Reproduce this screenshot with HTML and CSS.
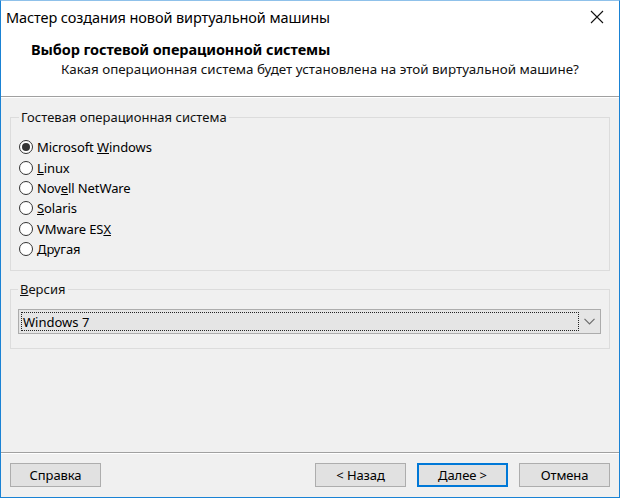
FILE: index.html
```html
<!DOCTYPE html>
<html lang="ru">
<head>
<meta charset="utf-8">
<link rel="stylesheet" href="styles.css">
</head>
<body>
<div class="window">
  <div class="titlebar">
    <span class="title">Мастер создания новой виртуальной машины</span>
    <span class="close">
      <svg width="14" height="14" viewBox="0 0 14 14"><path d="M1 1L13 13M13 1L1 13" stroke="#111" stroke-width="1.1" fill="none"/></svg>
    </span>
  </div>
  <div class="header">
    <div class="h-title">Выбор гостевой операционной системы</div>
    <div class="h-sub">Какая операционная система будет установлена на этой виртуальной машине?</div>
  </div>
  <div class="body">
    <fieldset class="group g-os">
      <legend>Гостевая операционная система</legend>
      <div class="radio checked"><span class="dot"></span><span>Microsoft <u>W</u>indows</span></div>
      <div class="radio"><span class="dot"></span><span><u>L</u>inux</span></div>
      <div class="radio"><span class="dot"></span><span>Nov<u>e</u>ll NetWare</span></div>
      <div class="radio"><span class="dot"></span><span><u>S</u>olaris</span></div>
      <div class="radio"><span class="dot"></span><span>VMware ES<u>X</u></span></div>
      <div class="radio"><span class="dot"></span><span><u>Д</u>ругая</span></div>
    </fieldset>
    <fieldset class="group g-ver">
      <legend><u>В</u>ерсия</legend>
      <div class="combo">
        <div class="combo-text"><span>Windows 7</span></div>
        <div class="combo-arrow">
          <svg width="11" height="7" viewBox="0 0 11 7"><path d="M0.5 0.8L5.5 5.8L10.5 0.8" stroke="#6d6d6d" stroke-width="1.2" fill="none"/></svg>
        </div>
      </div>
    </fieldset>
  </div>
  <div class="footer">
    <button class="btn">Справка</button>
    <div class="spacer"></div>
    <button class="btn">&lt; Назад</button>
    <button class="btn default">Далее &gt;</button>
    <button class="btn">Отмена</button>
  </div>
</div>
</body>
</html>
```
FILE: styles.css
```css
* { box-sizing: border-box; }
html, body { margin: 0; padding: 0; background: #ffffff; }
body { font-family: "Noto Sans", "Open Sans", sans-serif; color: #000; }

.window {
  width: 620px;
  height: 498px;
  border: 1px solid #1a82d4;
  border-top-color: #8fc1ea;
  display: flex;
  flex-direction: column;
  background: #f0f0f0;
}

.titlebar {
  height: 31px;
  background: #fff;
  display: flex;
  align-items: center;
  padding-left: 5px;
  padding-right: 10px;
}
.title { font-size: 14.5px; flex: 1; letter-spacing: -0.1px; }
.close { display: flex; align-items: center; justify-content: center; width: 24px; height: 24px; }

.header {
  background: #fff;
  height: 65px;
  padding-top: 7px;
  border-bottom: 1px solid #a0a0a0;
  box-shadow: 0 1px 0 #fff;
}
.h-title { font-weight: bold; font-size: 14.5px; padding-left: 30px; line-height: 20px; letter-spacing: -0.1px; }
.h-sub { font-size: 13.4px; padding-left: 60px; line-height: 20px; letter-spacing: 0; color: #111; }

.body {
  flex: 1;
  padding: 12px 9px 0 9px;
  display: flex;
  flex-direction: column;
}

.group {
  margin: 0;
  border: 1px solid #dcdcdc;
  padding: 0 8px;
  font-size: 13px;
}
.group legend {
  padding: 0 2px;
  margin-left: 0;
  line-height: 16px;
  color: #111;
}
.g-os { height: 162px; padding-top: 12px; }
.g-ver { height: 68px; margin-top: 10px; padding-top: 12px; padding-left: 7px; padding-right: 8px; }

.radio {
  display: flex;
  align-items: center;
  height: 20.4px;
  gap: 4px;
  letter-spacing: -0.1px;
}
.dot {
  width: 14px;
  height: 14px;
  border: 1px solid #333;
  border-radius: 50%;
  background: #fff;
  display: flex;
  align-items: center;
  justify-content: center;
  flex: none;
}
.radio.checked .dot::after {
  content: "";
  width: 8px;
  height: 8px;
  border-radius: 50%;
  background: #333;
}

.combo {
  height: 25px;
  border: 1px solid #acacac;
  background: #e5e5e5;
  display: flex;
  align-items: stretch;
  padding: 2px;
}
.combo-text {
  flex: 1;
  border: 1px dotted #222;
  display: flex;
  align-items: center;
  padding-left: 1px;
  font-size: 13px;
}
.combo-arrow { width: 18px; display: flex; align-items: center; justify-content: center; margin-left: 1px; }

.footer {
  height: 45px;
  border-top: 1px solid #a0a0a0;
  box-shadow: inset 0 1px 0 #fff;
  display: flex;
  align-items: center;
  padding: 0 9px;
  gap: 11px;
}
.spacer { flex: 1; }
.btn {
  width: 91px;
  height: 24px;
  border: 1px solid #adadad;
  background: #e1e1e1;
  font-family: "Noto Sans", "Open Sans", sans-serif;
  font-size: 13px;
  color: #000;
  padding: 0;
  letter-spacing: -0.1px;
}
.btn.default { border: 2px solid #0078d7; }
```
